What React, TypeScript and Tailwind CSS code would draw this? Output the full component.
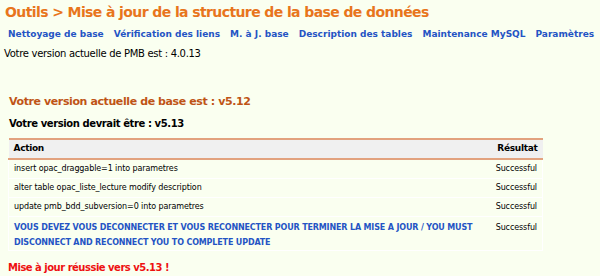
const links = [
  "Nettoyage de base",
  "Vérification des liens",
  "M. à J. base",
  "Description des tables",
  "Maintenance MySQL",
  "Paramètres",
];

const rows = [
  "insert opac_draggable=1 into parametres",
  "alter table opac_liste_lecture modify description",
  "update pmb_bdd_subversion=0 into parametres",
];

export default function App() {
  return (
    <div
      className="h-[276px] w-[600px] overflow-hidden bg-[#fafff0] text-black"
      style={{ fontFamily: '"DejaVu Sans", Verdana, sans-serif' }}
    >
      <h1 className="pl-[5px] pt-[2px] text-[14px] font-bold leading-[20px] tracking-[-0.6px] text-[#e8751c]">
        Outils &gt; Mise à jour de la structure de la base de données
      </h1>
      <nav className="mt-[5px] flex gap-[10px] pl-[8px] text-[9px] font-bold leading-[14px] text-[#2454c4]">
        {links.map((l) => (
          <a key={l} className="whitespace-nowrap">
            {l}
          </a>
        ))}
      </nav>
      <p className="mt-[6px] pl-[4px] text-[10px] leading-[14px] tracking-[-0.3px]">
        Votre version actuelle de PMB est : 4.0.13
      </p>

      <h2 className="mt-[33px] pl-[9px] text-[11px] font-bold leading-[16px] tracking-[-0.4px] text-[#bf5416]">
        Votre version actuelle de base est : v5.12
      </h2>
      <h3 className="mt-[7px] pl-[9px] text-[10px] font-bold leading-[14px] tracking-[-0.4px]">
        Votre version devrait être : v5.13
      </h3>

      <table className="ml-[8px] mt-[7px] w-[535px] border-collapse text-[8px] tracking-[-0.1px]">
        <thead>
          <tr className="border-y-2 border-[#e2a27e] bg-[#f0f0f0] text-[9px] font-bold tracking-[-0.3px]">
            <th className="h-[20px] pl-[5px] text-left">Action</th>
            <th className="pr-[5px] text-right">Résultat</th>
          </tr>
        </thead>
        <tbody>
          {rows.map((r) => (
            <tr key={r} className="border border-white">
              <td className="h-[19px] pl-[5px]">{r}</td>
              <td className="pr-[5px] text-right">Successful</td>
            </tr>
          ))}
          <tr className="border border-white">
            <td className="h-[34px] w-[480px] pl-[5px] pt-[3px] align-top font-bold leading-[15px] tracking-[-0.15px] text-[#2454c4]">
              VOUS DEVEZ VOUS DECONNECTER ET VOUS RECONNECTER POUR TERMINER LA MISE A JOUR / YOU MUST
              DISCONNECT AND RECONNECT YOU TO COMPLETE UPDATE
            </td>
            <td className="pr-[5px] pt-[3px] text-right align-top leading-[15px]">Successful</td>
          </tr>
        </tbody>
      </table>

      <p className="mt-[10px] pl-[8px] text-[10px] font-bold leading-[14px] tracking-[-0.5px] text-[#ee1111]">
        Mise à jour réussie vers v5.13 !
      </p>
    </div>
  );
}
